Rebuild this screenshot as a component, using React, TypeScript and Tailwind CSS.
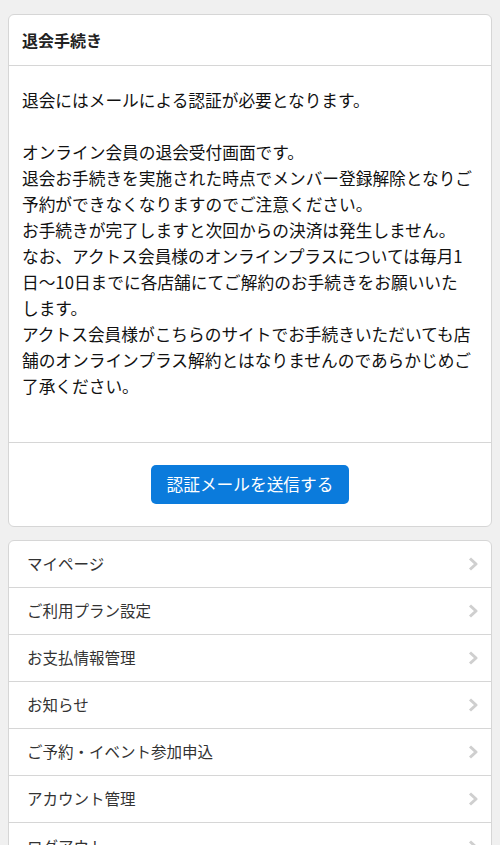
const FONT = "font-['Noto_Sans_CJK_JP','Noto_Sans',sans-serif]";

const menuItems = [
  "マイページ",
  "ご利用プラン設定",
  "お支払情報管理",
  "お知らせ",
  "ご予約・イベント参加申込",
  "アカウント管理",
  "ログアウト",
];

const bodyLines = [
  "退会にはメールによる認証が必要となります。",
  "",
  "オンライン会員の退会受付画面です。",
  "退会お手続きを実施された時点でメンバー登録解除となりご",
  "予約ができなくなりますのでご注意ください。",
  "お手続きが完了しますと次回からの決済は発生しません。",
  "なお、アクトス会員様のオンラインプラスについては毎月1",
  "日〜10日までに各店舗にてご解約のお手続きをお願いいた",
  "します。",
  "アクトス会員様がこちらのサイトでお手続きいただいても店",
  "舗のオンラインプラス解約とはなりませんのであらかじめご",
  "了承ください。",
];

function Chevron() {
  return (
    <svg width="10" height="14" viewBox="0 0 10 14" className="shrink-0">
      <path d="M2 1.5 L8 7 L2 12.5" fill="none" stroke="#cfcfcf" strokeWidth="3" strokeLinejoin="round" />
    </svg>
  );
}

export default function App() {
  return (
    <div className={`${FONT} min-h-[845px] bg-[#f0f0f0] px-2 pt-[14px] pb-4`}>
      {/* 退会カード */}
      <section className="overflow-hidden rounded-[6px] border border-[#d6d6d6] bg-white">
        <h2 className="flex h-[51px] items-center border-b border-[#d6d6d6] px-[13px] text-[16px] font-bold text-[#222]">
          退会手続き
        </h2>
        <div className="border-b border-[#d6d6d6] px-[13px] pt-[21px] pb-[43px] text-[16.7px] leading-[26px] text-[#111] whitespace-nowrap">
          {bodyLines.map((line, i) => (
            <div key={i} className="h-[26px]">
              {line}
            </div>
          ))}
        </div>
        <div className="flex justify-center pt-[22px] pb-[22px]">
          <button className="h-[39px] w-[198px] rounded-[5px] bg-[#0b7bdc] text-[16.7px] text-white">
            認証メールを送信する
          </button>
        </div>
      </section>

      {/* メニュー */}
      <nav className="mt-[13px] overflow-hidden rounded-[6px] border border-[#d6d6d6] bg-white">
        {menuItems.map((item) => (
          <div
            key={item}
            className="flex h-[47px] items-center justify-between border-b border-[#d6d6d6] pr-[13px] pl-[18px] text-[15.5px] text-[#333] last:border-b-0"
          >
            <span>{item}</span>
            <Chevron />
          </div>
        ))}
      </nav>
    </div>
  );
}
